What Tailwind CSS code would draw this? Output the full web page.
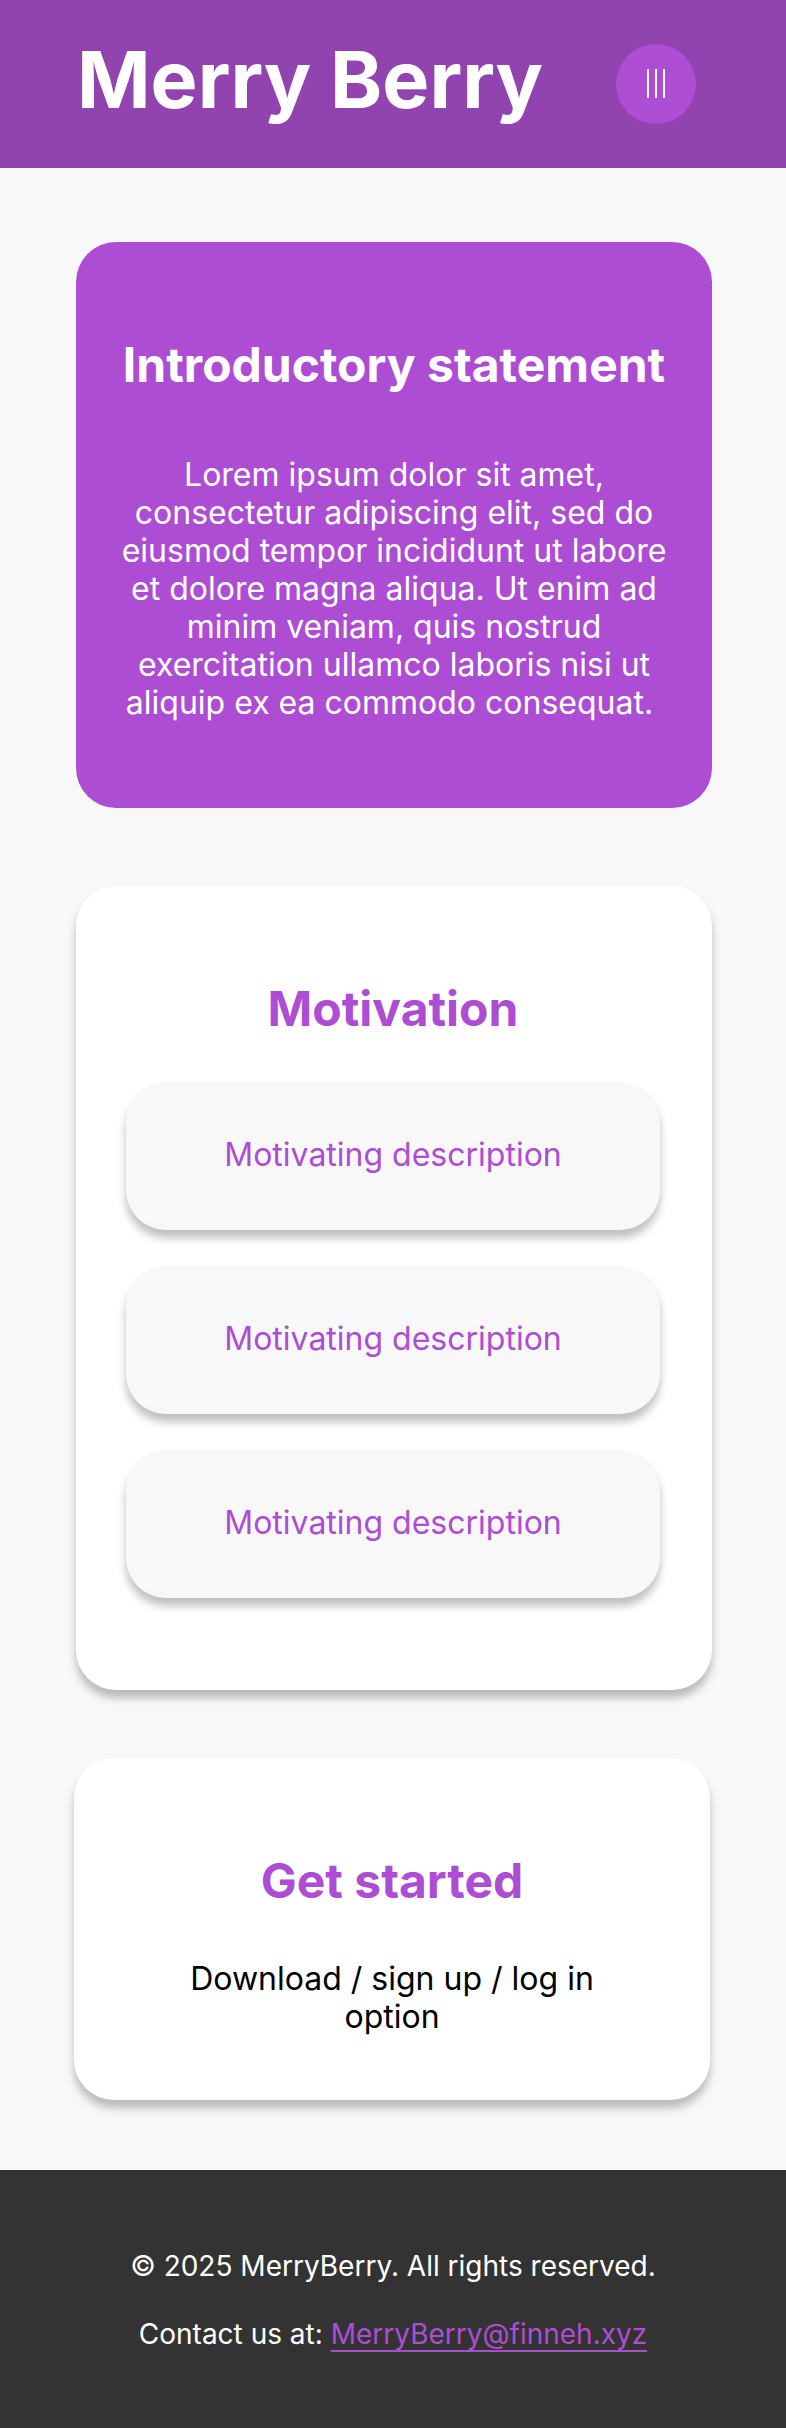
<!DOCTYPE html>
<html lang="en">
<head>
<meta charset="utf-8">
<meta name="viewport" content="width=device-width, initial-scale=1">
<title>Merry Berry</title>
<script src="https://cdn.jsdelivr.net/npm/@tailwindcss/browser@4"></script>
</head>
<body class="bg-[#f8f8f8] font-[Inter,sans-serif] text-[32px] leading-[38px] text-black">
  <header class="flex items-start justify-between bg-[#9144af] pt-[31px] pr-[90px] pb-10 pl-[77px]">
    <h1 class="text-[79px] leading-[97px] font-bold text-white">Merry Berry</h1>
    <button type="button" aria-label="Open menu" class="mt-[13px] flex size-20 shrink-0 items-center justify-center rounded-full bg-[#ad4dd4]">
      <svg class="h-[30px] w-[18px]" viewBox="0 0 18 30" fill="none" stroke="#fff" stroke-width="2" aria-hidden="true">
        <path d="M1 0V29M9 0V29M17 0V29"/>
      </svg>
    </button>
  </header>

  <main class="flex flex-col pt-[74px] pb-[70px] text-center">
    <section class="mr-[74px] ml-[76px] rounded-[40px] bg-[#ad4dd4] px-[42px] pt-[94px] pb-[86px] text-white">
      <h2 class="text-[48px] leading-[58px] font-bold whitespace-nowrap">Introductory statement</h2>
      <p class="mt-[62px]">Lorem ipsum dolor sit amet, consectetur adipiscing elit, sed do eiusmod tempor incididunt ut labore et dolore magna aliqua. Ut enim ad minim veniam, quis nostrud exercitation ullamco laboris nisi ut aliquip ex ea commodo consequat.&nbsp;</p>
    </section>

    <section class="mt-[78px] mr-[74px] ml-[76px] rounded-[40px] bg-white pt-[94px] pr-[52px] pb-[92px] pl-[50px] shadow-[0_8px_8px_rgba(0,0,0,0.25)]">
      <h2 class="text-[48px] leading-[58px] font-bold text-[#ad4dd4]">Motivation</h2>
      <ul class="mt-11 flex flex-col gap-9 text-[#ad4dd4]">
        <li class="rounded-[40px] bg-[#f8f8f8] pt-[54px] pb-14 shadow-[0_8px_8px_rgba(0,0,0,0.25)]">Motivating description</li>
        <li class="rounded-[40px] bg-[#f8f8f8] pt-[54px] pb-14 shadow-[0_8px_8px_rgba(0,0,0,0.25)]">Motivating description</li>
        <li class="rounded-[40px] bg-[#f8f8f8] pt-[54px] pb-14 shadow-[0_8px_8px_rgba(0,0,0,0.25)]">Motivating description</li>
      </ul>
    </section>

    <section class="mt-[68px] mr-[76px] ml-[74px] rounded-[40px] bg-white px-[98px] pt-[94px] pb-16 shadow-[0_8px_8px_rgba(0,0,0,0.25)]">
      <h2 class="text-[48px] leading-[58px] font-bold text-[#ad4dd4]">Get started</h2>
      <p class="mt-[50px]">Download / sign up / log in option</p>
    </section>
  </main>

  <footer class="bg-[#333333] px-10 pt-[79px] pb-[77px] text-center text-[28px] leading-[34px] text-white">
    <p>© 2025 MerryBerry. All rights reserved.</p>
    <p class="mt-[34px]">Contact us at: <a href="mailto:MerryBerry@finneh.xyz" class="text-[#ad4dd4] underline decoration-2 underline-offset-[6px]">MerryBerry@finneh.xyz</a></p>
  </footer>
</body>
</html>
